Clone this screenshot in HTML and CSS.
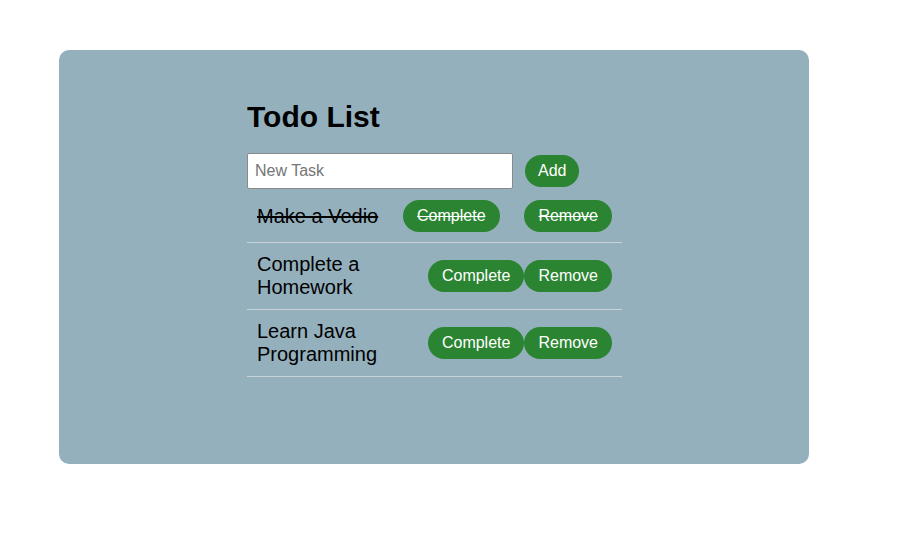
FILE: index.html
```html
<!DOCTYPE html>
<html>
<head>
<meta charset="utf-8">
<link rel="stylesheet" href="styles.css">
</head>
<body>
<div class="card">
  <div class="todo">
    <h1 class="title">Todo List</h1>
    <div class="add-row">
      <input class="task-input" type="text" placeholder="New Task">
      <button class="btn btn-add">Add</button>
    </div>
    <ul class="list">
      <li class="item done">
        <span class="text">Make a Vedio</span>
        <button class="btn">Complete</button>
        <button class="btn">Remove</button>
      </li>
      <li class="item">
        <span class="text">Complete a Homework</span>
        <button class="btn">Complete</button>
        <button class="btn">Remove</button>
      </li>
      <li class="item">
        <span class="text">Learn Java Programming</span>
        <button class="btn">Complete</button>
        <button class="btn">Remove</button>
      </li>
    </ul>
  </div>
</div>
</body>
</html>
```
FILE: styles.css
```css
html, body {
  margin: 0;
  padding: 0;
  background: #fff;
  font-family: "Liberation Sans", Arial, sans-serif;
}
body {
  padding: 50px 0 0 59px;
}
.card {
  width: 750px;
  height: 414px;
  box-sizing: border-box;
  background: #94b0bd;
  border-radius: 10px;
  padding-top: 48px;
  display: flex;
  justify-content: center;
}
.todo {
  width: 375px;
  margin-left: 1px;
}
.title {
  margin: 0 0 17px 0;
  font-size: 30px;
  font-weight: bold;
  line-height: 38px;
  color: #000;
}
.add-row {
  display: flex;
  align-items: center;
  gap: 12px;
}
.task-input {
  width: 266px;
  height: 36px;
  box-sizing: border-box;
  border: 1px solid #8a8a8a;
  border-radius: 2px;
  padding: 0 7px;
  font-family: "Liberation Sans", Arial, sans-serif;
  font-size: 16px;
  background: #fff;
}
.task-input::placeholder {
  color: #757575;
}
.btn {
  background: #2b8431;
  color: #fff;
  border: none;
  border-radius: 16px;
  height: 32px;
  padding: 0 14px;
  font-family: "Liberation Sans", Arial, sans-serif;
  font-size: 16px;
  cursor: pointer;
}
.btn-add {
  padding: 0 13px;
}
.list {
  list-style: none;
  margin: 1px 0 0 0;
  padding: 0;
}
.item {
  display: flex;
  justify-content: space-between;
  align-items: center;
  padding: 10px;
  border-bottom: 1px solid #c9d4d9;
  font-size: 20px;
}
.item.done {
  text-decoration: line-through;
}
.item.done .btn {
  text-decoration: line-through;
}
.text {
  color: #000;
  line-height: 23px;
}
```
